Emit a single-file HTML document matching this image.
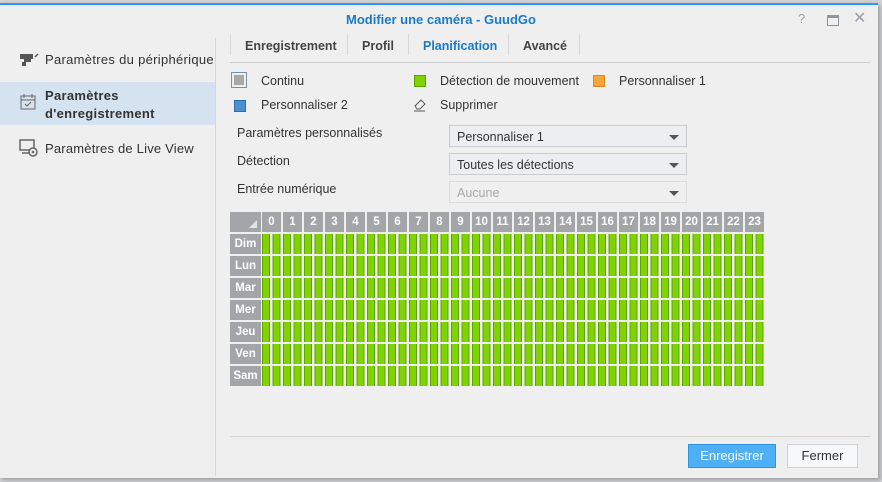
<!DOCTYPE html><html><head><meta charset="utf-8"><style>
body{margin:0;width:882px;height:482px;background:#cfd1d3;font-family:"Liberation Sans",sans-serif;position:relative;overflow:hidden;font-size:12.5px;color:#333}
.a{position:absolute}
#win{left:0;top:3px;width:878px;height:473px;background:#efefef;border-top:2px solid #2f9be8;box-shadow:2px 2px 4px rgba(0,0,0,.25)}
.t{font-weight:bold}
.dd{position:absolute;left:449px;width:238px;height:22px;border:1px solid #c9cdd1;background:#eceef1;box-sizing:border-box;padding:4px 7px;font-size:12.5px}
.dd:after{content:"";position:absolute;right:7px;top:9px;border:5px solid transparent;border-top:5px solid #555;border-bottom:0}
.row{position:absolute;left:262px;width:504px;height:20px;background:repeating-linear-gradient(to right,#5fa300 0 1px,#7fd300 1px 7px,#5fa300 7px 8px,transparent 8px 10.5px,#5fa300 10.5px 11.5px,#7fd300 11.5px 17.5px,#5fa300 17.5px 18.5px,transparent 18.5px 21px)}
.lab{position:absolute;left:230px;width:31px;height:20px;background:#a3a5a8;color:#fff;font-weight:bold;font-size:11.5px;line-height:20px;text-align:center}
.hd{position:absolute;top:212px;left:262px;display:flex}
.hd span{width:19px;margin-right:2px;height:20px;background:#a3a5a8;color:#fff;font-weight:bold;font-size:11.5px;line-height:20px;text-align:center}
</style></head><body>
<div id="win" class="a"></div>
<div class="a t" style="left:0;width:882px;top:12px;text-align:center;color:#1a7ac8;font-size:13px">Modifier une caméra - GuudGo</div>
<div class="a" style="left:798px;top:11px;color:#9aa0a8;font-size:13px">?</div>
<div class="a" style="left:827px;top:15px;width:10px;height:7px;border:1px solid #8f959c;border-top-width:3px"></div>
<div class="a" style="left:853px;top:8px;color:#9aa0a8;font-size:16px">✕</div>
<div class="a" style="left:215px;top:38px;width:1px;height:438px;background:#d6d6d6"></div>
<div class="a" style="left:0;top:82px;width:215px;height:43px;background:#d4e3ef"></div>
<svg class="a" style="left:20px;top:52px" width="20" height="16"><rect x="0" y="2" width="13" height="5" fill="#555"/><rect x="4" y="7" width="7" height="3" fill="#555"/><rect x="2" y="10" width="4" height="4" fill="#555"/><path d="M15 5l3-3" stroke="#555" stroke-width="1.5"/></svg>
<div class="a" style="left:45px;top:52px;font-size:13px;letter-spacing:0.3px">Paramètres du périphérique</div>
<svg class="a" style="left:20px;top:93px" width="16" height="17"><rect x="1" y="3" width="14" height="13" fill="none" stroke="#666"/><path d="M4 1v4M12 1v4M1 7h14M5 11l2 2 4-4" stroke="#666" fill="none"/></svg>
<div class="a t" style="left:45px;top:87px;font-size:13px;line-height:18px;color:#333;letter-spacing:0.3px">Paramètres<br>d'enregistrement</div>
<svg class="a" style="left:19px;top:139px" width="20" height="18"><rect x="1" y="1" width="14" height="10" fill="none" stroke="#666" stroke-width="1.5"/><path d="M3 14h8" stroke="#666" stroke-width="1.5"/><circle cx="14" cy="13" r="4" fill="#efefef" stroke="#666" stroke-width="1.5"/><circle cx="14" cy="13" r="1.3" fill="#666"/></svg>
<div class="a" style="left:45px;top:141px;font-size:13px;letter-spacing:0.2px">Paramètres de Live View</div>
<div class="a" style="left:230px;top:34px;width:1px;height:21px;background:#d8d8d8"></div>
<div class="a t" style="left:245px;top:39px;color:#444">Enregistrement</div>
<div class="a" style="left:347px;top:34px;width:1px;height:21px;background:#d8d8d8"></div>
<div class="a t" style="left:362px;top:39px;color:#444">Profil</div>
<div class="a" style="left:408px;top:34px;width:1px;height:21px;background:#d8d8d8"></div>
<div class="a t" style="left:423px;top:39px;color:#1a7ac8">Planification</div>
<div class="a" style="left:508px;top:34px;width:1px;height:21px;background:#d8d8d8"></div>
<div class="a t" style="left:523px;top:39px;color:#444">Avancé</div>
<div class="a" style="left:579px;top:34px;width:1px;height:21px;background:#d8d8d8"></div>
<div class="a" style="left:230px;top:62px;width:640px;height:1px;background:#cfcfcf"></div>
<div class="a" style="left:231px;top:72px;width:16px;height:16px;border:1px solid #7d8fa0;box-sizing:border-box;padding:2px"><div style="width:10px;height:10px;background:#a8a8a8"></div></div>
<div class="a" style="left:261px;top:74px">Continu</div>
<div class="a" style="left:414px;top:75px;width:12px;height:12px;background:#7fd300;border:1px solid #5fa300;box-sizing:border-box"></div>
<div class="a" style="left:440px;top:74px">Détection de mouvement</div>
<div class="a" style="left:593px;top:75px;width:12px;height:12px;background:#f9a53a;border:1px solid #d88a20;box-sizing:border-box"></div>
<div class="a" style="left:619px;top:74px">Personnaliser 1</div>
<div class="a" style="left:234px;top:100px;width:12px;height:12px;background:#4a8fd0;border:1px solid #2d6ea8;box-sizing:border-box"></div>
<div class="a" style="left:261px;top:98px">Personnaliser 2</div>
<svg class="a" style="left:413px;top:98px" width="14" height="14"><path d="M2 8l6-6 4 4-5 5H4z" fill="none" stroke="#555"/><path d="M1 13h11" stroke="#555"/></svg>
<div class="a" style="left:440px;top:98px">Supprimer</div>
<div class="a" style="left:237px;top:126px">Paramètres personnalisés</div>
<div class="dd" style="top:125px">Personnaliser 1</div>
<div class="a" style="left:237px;top:154px">Détection</div>
<div class="dd" style="top:153px">Toutes les détections</div>
<div class="a" style="left:237px;top:182px">Entrée numérique</div>
<div class="dd" style="top:181px;color:#aaa;background:#efefef;border-color:#ddd">Aucune</div>
<div class="a" style="left:230px;top:212px;width:31px;height:20px;background:#a3a5a8"><div style="position:absolute;right:4px;bottom:4px;border-left:8px solid transparent;border-bottom:8px solid #dfe3e6"></div></div>
<div class="hd"><span>0</span><span>1</span><span>2</span><span>3</span><span>4</span><span>5</span><span>6</span><span>7</span><span>8</span><span>9</span><span>10</span><span>11</span><span>12</span><span>13</span><span>14</span><span>15</span><span>16</span><span>17</span><span>18</span><span>19</span><span>20</span><span>21</span><span>22</span><span>23</span></div>
<div class="lab" style="top:234px">Dim</div><div class="row" style="top:234px"></div>
<div class="lab" style="top:256px">Lun</div><div class="row" style="top:256px"></div>
<div class="lab" style="top:278px">Mar</div><div class="row" style="top:278px"></div>
<div class="lab" style="top:300px">Mer</div><div class="row" style="top:300px"></div>
<div class="lab" style="top:322px">Jeu</div><div class="row" style="top:322px"></div>
<div class="lab" style="top:344px">Ven</div><div class="row" style="top:344px"></div>
<div class="lab" style="top:366px">Sam</div><div class="row" style="top:366px"></div>
<div class="a" style="left:230px;top:436px;width:640px;height:1px;background:#d2d2d2"></div>
<div class="a" style="left:688px;top:444px;width:88px;height:24px;background:#4db0f7;border:1px solid #2f94e0;box-sizing:border-box;color:#fff;text-align:center;line-height:22px;font-size:13px">Enregistrer</div>
<div class="a" style="left:787px;top:444px;width:71px;height:24px;background:#f7f8fa;border:1px solid #cfd3d8;box-sizing:border-box;color:#333;text-align:center;line-height:22px;font-size:13px">Fermer</div>
</body></html>
